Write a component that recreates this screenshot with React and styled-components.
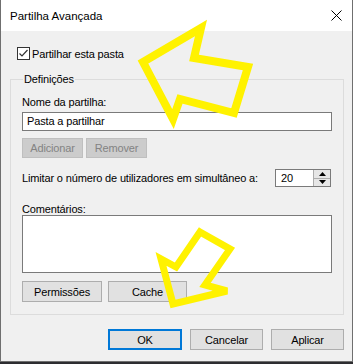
import React from 'react';
import styled, { createGlobalStyle, css } from 'styled-components';

const GlobalStyle = createGlobalStyle`
  html, body {
    margin: 0;
    padding: 0;
    background: #2d2d30;
  }
  body {
    font-family: "Liberation Sans", Arial, sans-serif;
  }
`;

const Window = styled.div`
  position: relative;
  width: 351px;
  height: 361px;
  background: #f0f0f0;
  border: 1px solid #6f6f6f;
  border-top: none;
  display: flex;
  flex-direction: column;
  font-size: 11px;
  letter-spacing: -0.15px;
  color: #000;
  white-space: nowrap;
`;

const TitleBar = styled.div`
  height: 31px;
  background: #fff;
  display: flex;
  align-items: center;
  justify-content: space-between;
  padding: 0 10px 0 9px;
`;

const Title = styled.div`
  font-size: 11.5px;
  letter-spacing: 0;
`;

const Body = styled.div`
  flex: 1;
  display: flex;
  flex-direction: column;
  padding: 16px 8px 0 8px;
`;

const CheckRow = styled.label`
  display: flex;
  align-items: center;
  gap: 2px;
  margin-left: 8px;
  height: 13px;
`;

const Box = styled.span`
  width: 11px;
  height: 11px;
  border: 1px solid #333;
  background: #fff;
  display: flex;
  align-items: center;
  justify-content: center;
`;

const Group = styled.fieldset`
  margin: 12px 0 0 1px;
  padding: 6px 11px 12px 11px;
  border: 1px solid #dcdcdc;
  box-sizing: border-box;
  display: flex;
  flex-direction: column;
  min-width: 0;
`;

const Legend = styled.legend`
  padding: 0 1px;
  margin-left: 1px;
  height: 14px;
  line-height: 14px;
`;

const Label = styled.div`
  height: ${p => p.$h || 14}px;
  line-height: ${p => p.$h || 14}px;
  margin-top: ${p => p.$top || 0}px;
`;

const TextField = styled.div`
  height: 17px;
  border: 1px solid #7a7a7a;
  background: #fff;
  padding-left: 4px;
  line-height: 17px;
  margin-top: 3px;
`;

const Row = styled.div`
  display: flex;
  align-items: center;
  gap: ${p => p.$gap || 3}px;
  margin-top: ${p => p.$top || 0}px;
`;

const Button = styled.div`
  box-sizing: border-box;
  width: ${p => p.$w}px;
  height: ${p => p.$h || 21}px;
  flex-shrink: 0;
  display: flex;
  align-items: center;
  justify-content: center;
  background: #e1e1e1;
  border: 1px solid #adadad;
  ${p => p.$disabled && css`
    background: #cccccc;
    border-color: #bfbfbf;
    color: #838383;
  `}
  ${p => p.$default && css`
    border: 2px solid #0078d7;
  `}
`;

const Spin = styled.div`
  width: 56px;
  height: 18px;
  flex-shrink: 0;
  box-sizing: border-box;
  border: 1px solid #7a7a7a;
  background: #fff;
  display: flex;
  margin-left: auto;
  margin-right: 1px;
`;

const SpinValue = styled.div`
  flex: 1;
  padding-left: 5px;
  line-height: 16px;
`;

const SpinButtons = styled.div`
  width: 16px;
  display: flex;
  flex-direction: column;
  border-left: 1px solid #adadad;
  background: #e6e6e6;
`;

const SpinHalf = styled.div`
  flex: 1;
  display: flex;
  align-items: center;
  justify-content: center;
  border-top: ${p => p.$bottom ? '1px solid #adadad' : 'none'};
`;

const Comments = styled.div`
  height: 56px;
  border: 1px solid #7a7a7a;
  background: #fff;
`;

const Footer = styled.div`
  display: flex;
  justify-content: flex-end;
  gap: 8px;
  margin-top: 14px;
`;

const Overlay = styled.svg`
  position: absolute;
  left: 0;
  top: 0;
  pointer-events: none;
`;

const App = () => {
  return (
    <>
      <GlobalStyle />
      <Window>
        <TitleBar>
          <Title>Partilha Avançada</Title>
          <svg width="11" height="11" viewBox="0 0 11 11">
            <path d="M0.5 0.5 L10.5 10.5 M10.5 0.5 L0.5 10.5" stroke="#000" strokeWidth="1" />
          </svg>
        </TitleBar>
        <Body>
          <CheckRow>
            <Box>
              <svg width="11" height="11" viewBox="0 0 11 11">
                <path d="M1.5 5.5 L4 8 L9.5 2" fill="none" stroke="#333" strokeWidth="1.2" />
              </svg>
            </Box>
            <span>Partilhar esta pasta</span>
          </CheckRow>
          <Group>
            <Legend>Definições</Legend>
            <Label $top={3}>Nome da partilha:</Label>
            <TextField>Pasta a partilhar</TextField>
            <Row $top={7} $gap={3}>
              <Button $w={61} $h={20} $disabled>Adicionar</Button>
              <Button $w={61} $h={20} $disabled>Remover</Button>
            </Row>
            <Row $top={11}>
              <span>Limitar o número de utilizadores em simultâneo a:</span>
              <Spin>
                <SpinValue>20</SpinValue>
                <SpinButtons>
                  <SpinHalf>
                    <svg width="7" height="4" viewBox="0 0 7 4"><path d="M0 4 L3.5 0 L7 4 Z" fill="#000" /></svg>
                  </SpinHalf>
                  <SpinHalf $bottom>
                    <svg width="7" height="4" viewBox="0 0 7 4"><path d="M0 0 L3.5 4 L7 0 Z" fill="#000" /></svg>
                  </SpinHalf>
                </SpinButtons>
              </Spin>
            </Row>
            <Label $top={16} $h={12}>Comentários:</Label>
            <Comments />
            <Row $top={8} $gap={6}>
              <Button $w={80}>Permissões</Button>
              <Button $w={79}>Cache</Button>
            </Row>
          </Group>
          <Footer>
            <Button $w={74} $default>OK</Button>
            <Button $w={73}>Cancelar</Button>
            <Button $w={73}>Aplicar</Button>
          </Footer>
        </Body>
        <Overlay width="353" height="364" viewBox="0 0 353 364">
          <polygon
            points="200,28 142,62 172,119 179,99 233,113 247,67 193,58"
            fill="none"
            stroke="#fff200"
            strokeWidth="8"
            strokeLinejoin="miter"
          />
          <polygon
            points="199,232 229,249 204,285 226,291 172,304 160,259 175,267"
            fill="none"
            stroke="#fff200"
            strokeWidth="7"
            strokeLinejoin="miter"
          />
        </Overlay>
      </Window>
    </>
  );
};

export default App;
